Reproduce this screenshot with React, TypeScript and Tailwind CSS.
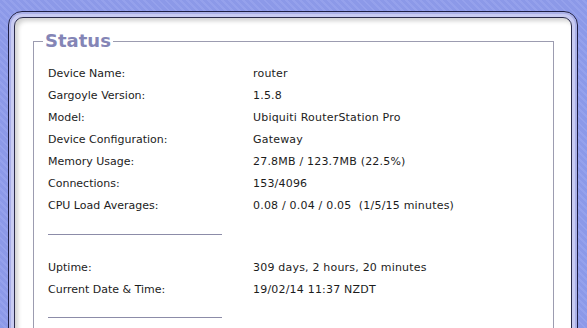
import React from 'react'

type Row = { label: string; value: string }

const topRows: Row[] = [
  { label: "Device Name:", value: "router" },
  { label: "Gargoyle Version:", value: "1.5.8" },
  { label: "Model:", value: "Ubiquiti RouterStation Pro" },
  { label: "Device Configuration:", value: "Gateway" },
  { label: "Memory Usage:", value: "27.8MB / 123.7MB (22.5%)" },
  { label: "Connections:", value: "153/4096" },
  { label: "CPU Load Averages:", value: "0.08 / 0.04 / 0.05  (1/5/15 minutes)" },
]

const timeRows: Row[] = [
  { label: "Uptime:", value: "309 days, 2 hours, 20 minutes" },
  { label: "Current Date & Time:", value: "19/02/14 11:37 NZDT" },
]

const StatusRow = ({ row }: { row: Row }) => (
  <div className="flex items-center h-[22px]">
    <span className="w-[205px] shrink-0">{row.label}</span>
    <span className="whitespace-pre tracking-[0.2px]">{row.value}</span>
  </div>
)

const App = () => {
  return (
    <div className="h-[328px] w-[587px] overflow-hidden pl-[8px] pr-[9px] pt-[11px] bg-[repeating-linear-gradient(45deg,#8c99e8_0px,#8c99e8_3px,#95a1ec_3px,#95a1ec_5px)]">
      {/* outer tube frame */}
      <div className="h-[400px] rounded-[14px] border border-[#1e1f45] p-[5px] bg-[#c8cbf2] shadow-[inset_0_0_0_2px_#aab0e8]">
        <div className="h-full rounded-[9px] border-[1.5px] border-[#2a2b4a] bg-white pt-[12px] pl-[18px] pr-[17px] shadow-[inset_3px_3px_4px_rgba(0,0,0,0.18)]">
          <fieldset className="border border-[#9c9cb0] px-[9px] pb-4 text-[11px] text-[#1c1c1c] font-['DejaVu_Sans',Verdana,sans-serif]">
            <legend className="px-[2px] text-[18px] leading-[22px] font-bold text-[#8485b6]">Status</legend>
            <div className="pl-[5px] pt-[11px]">
              {topRows.map((row, i) => (
                <StatusRow row={row} key={i + "top"} />
              ))}
              <div className="mt-[17px] h-px w-[174px] bg-[#8c8ca8]"></div>
              <div className="mt-[22px]">
                {timeRows.map((row, i) => (
                  <StatusRow row={row} key={i + "time"} />
                ))}
              </div>
              <div className="mt-[16px] h-px w-[174px] bg-[#8c8ca8]"></div>
            </div>
          </fieldset>
        </div>
      </div>
    </div>
  )
}

export default App
